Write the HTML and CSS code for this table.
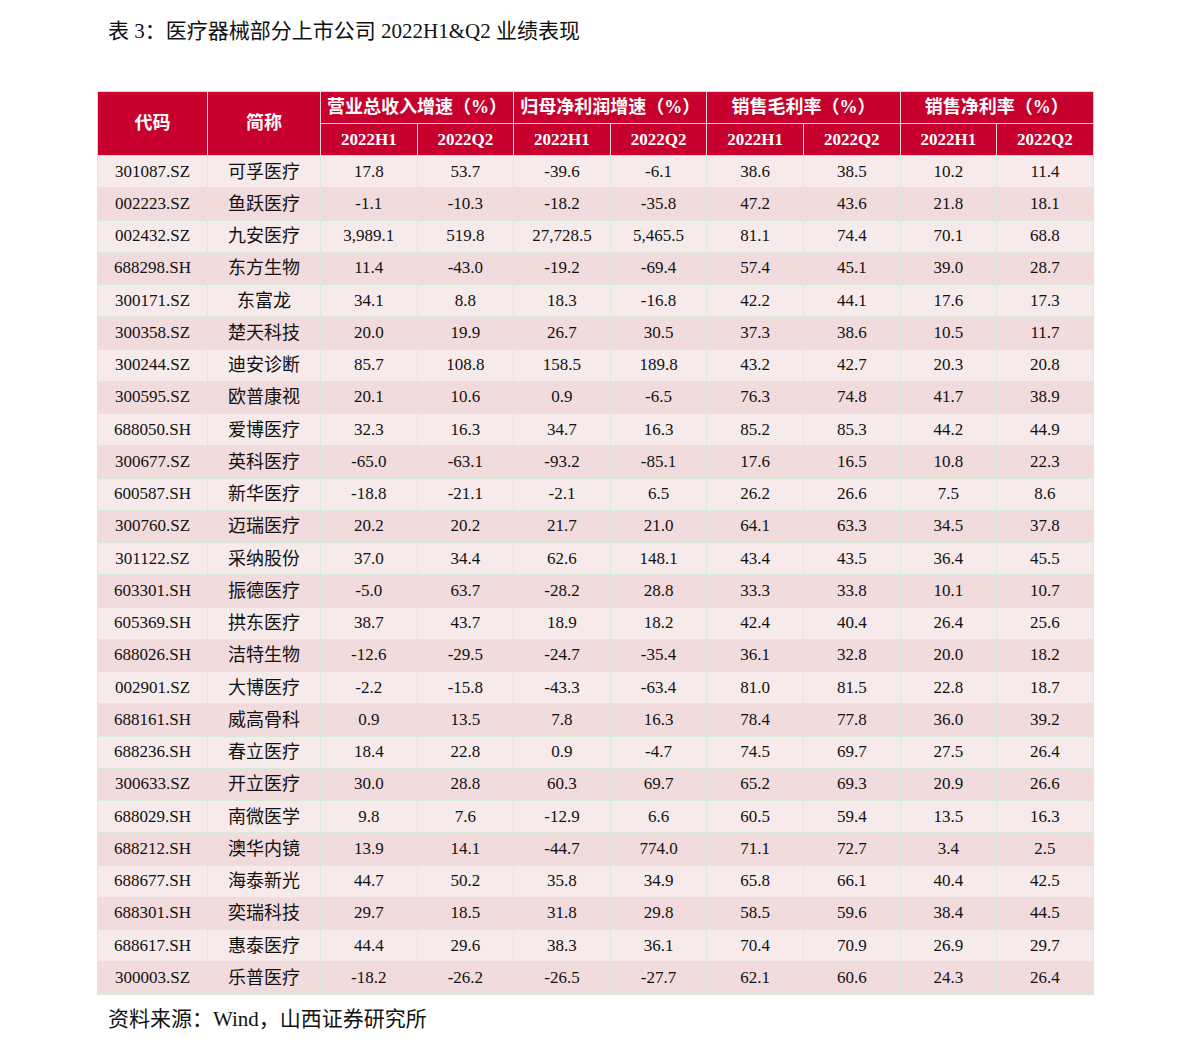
FILE: index.html
```html
<!DOCTYPE html>
<html lang="zh">
<head>
<meta charset="utf-8">
<title>医疗器械部分上市公司 2022H1&amp;Q2 业绩表现</title>
<link rel="stylesheet" href="styles.css">
</head>
<body>
<div class="page">
  <h1 class="title">表 3：医疗器械部分上市公司 2022H1&amp;Q2 业绩表现</h1>
  <table class="perf">
    <colgroup>
      <col class="c-code"><col class="c-name">
      <col class="c-num"><col class="c-num"><col class="c-num"><col class="c-num">
      <col class="c-num"><col class="c-num"><col class="c-num"><col class="c-num">
    </colgroup>
    <thead>
      <tr class="h1">
        <th rowspan="2">代码</th>
        <th rowspan="2">简称</th>
        <th colspan="2">营业总收入增速（%）</th>
        <th colspan="2">归母净利润增速（%）</th>
        <th colspan="2">销售毛利率（%）</th>
        <th colspan="2">销售净利率（%）</th>
      </tr>
      <tr class="h2">
        <th>2022H1</th><th>2022Q2</th><th>2022H1</th><th>2022Q2</th>
        <th>2022H1</th><th>2022Q2</th><th>2022H1</th><th>2022Q2</th>
      </tr>
    </thead>
    <tbody>
      <tr><td>301087.SZ</td><td class="nm">可孚医疗</td><td>17.8</td><td>53.7</td><td>-39.6</td><td>-6.1</td><td>38.6</td><td>38.5</td><td>10.2</td><td>11.4</td></tr>
      <tr><td>002223.SZ</td><td class="nm">鱼跃医疗</td><td>-1.1</td><td>-10.3</td><td>-18.2</td><td>-35.8</td><td>47.2</td><td>43.6</td><td>21.8</td><td>18.1</td></tr>
      <tr><td>002432.SZ</td><td class="nm">九安医疗</td><td>3,989.1</td><td>519.8</td><td>27,728.5</td><td>5,465.5</td><td>81.1</td><td>74.4</td><td>70.1</td><td>68.8</td></tr>
      <tr><td>688298.SH</td><td class="nm">东方生物</td><td>11.4</td><td>-43.0</td><td>-19.2</td><td>-69.4</td><td>57.4</td><td>45.1</td><td>39.0</td><td>28.7</td></tr>
      <tr><td>300171.SZ</td><td class="nm">东富龙</td><td>34.1</td><td>8.8</td><td>18.3</td><td>-16.8</td><td>42.2</td><td>44.1</td><td>17.6</td><td>17.3</td></tr>
      <tr><td>300358.SZ</td><td class="nm">楚天科技</td><td>20.0</td><td>19.9</td><td>26.7</td><td>30.5</td><td>37.3</td><td>38.6</td><td>10.5</td><td>11.7</td></tr>
      <tr><td>300244.SZ</td><td class="nm">迪安诊断</td><td>85.7</td><td>108.8</td><td>158.5</td><td>189.8</td><td>43.2</td><td>42.7</td><td>20.3</td><td>20.8</td></tr>
      <tr><td>300595.SZ</td><td class="nm">欧普康视</td><td>20.1</td><td>10.6</td><td>0.9</td><td>-6.5</td><td>76.3</td><td>74.8</td><td>41.7</td><td>38.9</td></tr>
      <tr><td>688050.SH</td><td class="nm">爱博医疗</td><td>32.3</td><td>16.3</td><td>34.7</td><td>16.3</td><td>85.2</td><td>85.3</td><td>44.2</td><td>44.9</td></tr>
      <tr><td>300677.SZ</td><td class="nm">英科医疗</td><td>-65.0</td><td>-63.1</td><td>-93.2</td><td>-85.1</td><td>17.6</td><td>16.5</td><td>10.8</td><td>22.3</td></tr>
      <tr><td>600587.SH</td><td class="nm">新华医疗</td><td>-18.8</td><td>-21.1</td><td>-2.1</td><td>6.5</td><td>26.2</td><td>26.6</td><td>7.5</td><td>8.6</td></tr>
      <tr><td>300760.SZ</td><td class="nm">迈瑞医疗</td><td>20.2</td><td>20.2</td><td>21.7</td><td>21.0</td><td>64.1</td><td>63.3</td><td>34.5</td><td>37.8</td></tr>
      <tr><td>301122.SZ</td><td class="nm">采纳股份</td><td>37.0</td><td>34.4</td><td>62.6</td><td>148.1</td><td>43.4</td><td>43.5</td><td>36.4</td><td>45.5</td></tr>
      <tr><td>603301.SH</td><td class="nm">振德医疗</td><td>-5.0</td><td>63.7</td><td>-28.2</td><td>28.8</td><td>33.3</td><td>33.8</td><td>10.1</td><td>10.7</td></tr>
      <tr><td>605369.SH</td><td class="nm">拱东医疗</td><td>38.7</td><td>43.7</td><td>18.9</td><td>18.2</td><td>42.4</td><td>40.4</td><td>26.4</td><td>25.6</td></tr>
      <tr><td>688026.SH</td><td class="nm">洁特生物</td><td>-12.6</td><td>-29.5</td><td>-24.7</td><td>-35.4</td><td>36.1</td><td>32.8</td><td>20.0</td><td>18.2</td></tr>
      <tr><td>002901.SZ</td><td class="nm">大博医疗</td><td>-2.2</td><td>-15.8</td><td>-43.3</td><td>-63.4</td><td>81.0</td><td>81.5</td><td>22.8</td><td>18.7</td></tr>
      <tr><td>688161.SH</td><td class="nm">威高骨科</td><td>0.9</td><td>13.5</td><td>7.8</td><td>16.3</td><td>78.4</td><td>77.8</td><td>36.0</td><td>39.2</td></tr>
      <tr><td>688236.SH</td><td class="nm">春立医疗</td><td>18.4</td><td>22.8</td><td>0.9</td><td>-4.7</td><td>74.5</td><td>69.7</td><td>27.5</td><td>26.4</td></tr>
      <tr><td>300633.SZ</td><td class="nm">开立医疗</td><td>30.0</td><td>28.8</td><td>60.3</td><td>69.7</td><td>65.2</td><td>69.3</td><td>20.9</td><td>26.6</td></tr>
      <tr><td>688029.SH</td><td class="nm">南微医学</td><td>9.8</td><td>7.6</td><td>-12.9</td><td>6.6</td><td>60.5</td><td>59.4</td><td>13.5</td><td>16.3</td></tr>
      <tr><td>688212.SH</td><td class="nm">澳华内镜</td><td>13.9</td><td>14.1</td><td>-44.7</td><td>774.0</td><td>71.1</td><td>72.7</td><td>3.4</td><td>2.5</td></tr>
      <tr><td>688677.SH</td><td class="nm">海泰新光</td><td>44.7</td><td>50.2</td><td>35.8</td><td>34.9</td><td>65.8</td><td>66.1</td><td>40.4</td><td>42.5</td></tr>
      <tr><td>688301.SH</td><td class="nm">奕瑞科技</td><td>29.7</td><td>18.5</td><td>31.8</td><td>29.8</td><td>58.5</td><td>59.6</td><td>38.4</td><td>44.5</td></tr>
      <tr><td>688617.SH</td><td class="nm">惠泰医疗</td><td>44.4</td><td>29.6</td><td>38.3</td><td>36.1</td><td>70.4</td><td>70.9</td><td>26.9</td><td>29.7</td></tr>
      <tr><td>300003.SZ</td><td class="nm">乐普医疗</td><td>-18.2</td><td>-26.2</td><td>-26.5</td><td>-27.7</td><td>62.1</td><td>60.6</td><td>24.3</td><td>26.4</td></tr>
    </tbody>
  </table>
  <p class="source">资料来源：Wind，山西证券研究所</p>
</div>
</body>
</html>
```

FILE: styles.css
```css
html, body {
  margin: 0;
  padding: 0;
  background: #ffffff;
}

.page {
  padding: 19px 0 0 97px;
  font-family: "Liberation Serif", "Noto Sans CJK SC", serif;
  color: #111111;
}

.title {
  margin: 0 0 48px 11px;
  font-size: 21px;
  line-height: 24px;
  font-weight: normal;
  color: #111111;
}

.perf {
  width: 996px;
  border-collapse: collapse;
  table-layout: fixed;
  font-size: 17px;
}

.c-code { width: 110px; }
.c-name { width: 113px; }
.c-num { width: 96.6px; }

.perf th {
  background: #c8002d;
  color: #ffffff;
  font-weight: bold;
  text-align: center;
  padding: 0;
  line-height: 22px;
  border: 1px solid #ead2d6;
}

.perf .h1 th {
  height: 30px;
  padding-bottom: 1px;
  font-size: 18px;
}

.perf .h1 th[rowspan] {
  height: auto;
  padding-bottom: 2px;
}

.perf .h2 th {
  height: 31px;
  font-size: 17px;
}

.perf td {
  height: 31.25px;
  padding: 0;
  line-height: 20px;
  text-align: center;
  border: 1px solid #d8ebd6;
  background: #f7eaeb;
}

.perf td.nm {
  font-size: 18px;
}

.perf tbody tr:nth-child(even) td {
  background: #f1dbdc;
}

.source {
  margin: 12px 0 0 11px;
  font-size: 21px;
  line-height: 24px;
  color: #111111;
}
```
